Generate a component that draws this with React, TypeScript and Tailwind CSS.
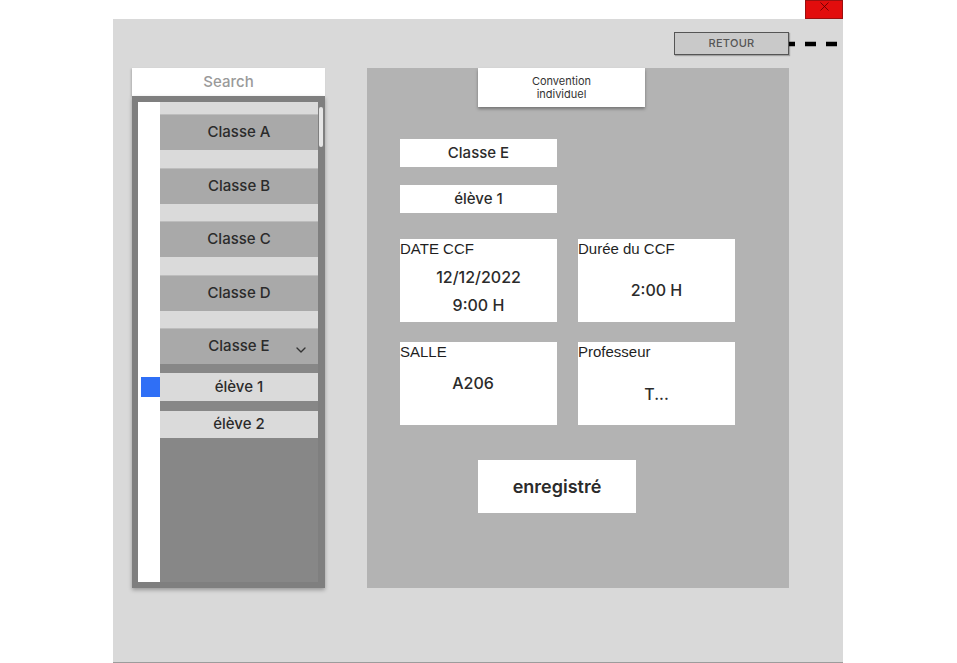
import React from 'react';
import { ChevronDown, X } from 'lucide-react';

const classes = ['Classe A', 'Classe B', 'Classe C', 'Classe D'];

function InfoBox({ label, children }: { label: string; children: React.ReactNode }) {
  return (
    <div className="w-[157px] h-[83px] bg-white flex flex-col">
      <div className="leading-[20px] text-[15px] text-[#1f1f1f] font-['Liberation_Sans',sans-serif]">{label}</div>
      {children}
    </div>
  );
}

export default function App() {
  return (
    <div className="w-[957px] h-[663px] bg-white pl-[113px] font-['Inter',sans-serif] text-[#2b2b2b]">
      <div className="w-[730px] h-full flex flex-col">
        <div className="h-[19px] flex justify-end">
          <button className="w-[38px] h-[19px] bg-[#e20d0d] border border-[#9a1010] flex items-start justify-center overflow-hidden">
            <X className="-mt-[2px] w-[15px] h-[15px] text-[#5a0000]" strokeWidth={1.3} />
          </button>
        </div>

        <div className="flex-1 bg-[#d9d9d9] border-b border-[#9c9c9c] flex flex-col">
          <div className="flex justify-end items-center pt-[13px]">
            <button className="w-[115px] h-[23px] bg-[#c9c9c9] border-[1.5px] border-[#555] shadow-[1px_1px_1px_rgba(0,0,0,0.25)] text-[11px] font-medium text-[#555] tracking-wide">
              RETOUR
            </button>
            <svg width="54" height="10" viewBox="0 0 54 10" className="shrink-0">
              <line x1="0" y1="5" x2="50" y2="5" stroke="#000" strokeWidth="4.5" strokeDasharray="6 10 11 10 11 10" />
            </svg>
          </div>

          <div className="flex pl-[19px] gap-[42px] mt-[13px]">
            {/* left list */}
            <div className="w-[193px] flex flex-col">
              <div className="h-[28px] bg-white shadow-[-1px_1px_2px_rgba(0,0,0,0.2)] flex items-center justify-center text-[15px] font-medium text-[#9a9a9a]">
                Search
              </div>
              <div className="h-[492px] border-[6px] border-r-0 border-[#7f7f7f] shadow-[0_2px_4px_rgba(0,0,0,0.3)] flex">
                <div className="w-[22px] bg-white flex flex-col pt-[275px]">
                  <div className="ml-[3px] w-[19px] h-[20px] bg-[#2f6ff6]" />
                </div>
                <div className="w-[158px] bg-[#dadada] flex flex-col pt-[12px] gap-[17.5px] font-medium">
                  {classes.map((c) => (
                    <div key={c} className="h-[36px] bg-[#a9a9a9] border-t border-[#bdbdbd] flex items-center justify-center text-[15px]">
                      {c}
                    </div>
                  ))}
                  <div className="flex-1 flex flex-col">
                    <div className="relative h-[36px] bg-[#a9a9a9] border-t border-[#bdbdbd] flex items-center justify-center text-[15px]">
                      Classe E
                      <ChevronDown className="absolute right-[9px] top-[13px] w-[16px] h-[16px] text-[#333]" strokeWidth={2} />
                    </div>
                    <div className="flex-1 bg-[#878787] flex flex-col pt-[9px] gap-[10px]">
                      <div className="h-[28px] bg-[#dadada] flex items-center justify-center text-[15px]">élève 1</div>
                      <div className="h-[27px] bg-[#dadada] flex items-center justify-center text-[15px]">élève 2</div>
                    </div>
                  </div>
                </div>
                <div className="w-[7px] bg-[#7f7f7f] pt-[5px] pl-[1px]">
                  <div className="w-[4px] h-[40px] bg-[#e6e6e6] rounded-sm" />
                </div>
              </div>
            </div>

            {/* right panel */}
            <div className="w-[422px] h-[520px] bg-[#b3b3b3] flex flex-col">
              <div className="ml-[111px] w-[167px] h-[39px] bg-white shadow-[0_2px_3px_rgba(0,0,0,0.35)] flex flex-col items-center justify-center text-[11px] leading-[13px] text-[#333]">
                <span>Convention</span>
                <span>individuel</span>
              </div>

              <div className="ml-[33px] mt-[32px] flex flex-col gap-[18px] font-medium">
                <div className="w-[157px] h-[28px] bg-white flex items-center justify-center text-[15px]">Classe E</div>
                <div className="w-[157px] h-[28px] bg-white flex items-center justify-center text-[15px]">élève 1</div>
              </div>

              <div className="ml-[33px] mt-[26px] grid grid-cols-[157px_157px] gap-x-[21px] gap-y-[20px]">
                <InfoBox label="DATE CCF">
                  <div className="mt-[4px] text-center text-[16px] leading-[28px] font-medium">12/12/2022</div>
                  <div className="text-center text-[16px] leading-[28px] font-medium">9:00 H</div>
                </InfoBox>
                <InfoBox label="Durée du CCF">
                  <div className="mt-[17px] text-center text-[16px] leading-[28px] font-medium">2:00 H</div>
                </InfoBox>
                <InfoBox label="SALLE">
                  <div className="mt-[7px] pr-[11px] text-center text-[16px] leading-[28px] font-medium">A206</div>
                </InfoBox>
                <InfoBox label="Professeur">
                  <div className="mt-[18px] text-center text-[16px] leading-[28px] font-medium">T...</div>
                </InfoBox>
              </div>

              <button className="ml-[111px] mt-[35px] w-[158px] h-[53px] bg-white text-[18px] font-semibold text-[#2b2b2b]">
                enregistré
              </button>
            </div>
          </div>
        </div>
      </div>
    </div>
  );
}
